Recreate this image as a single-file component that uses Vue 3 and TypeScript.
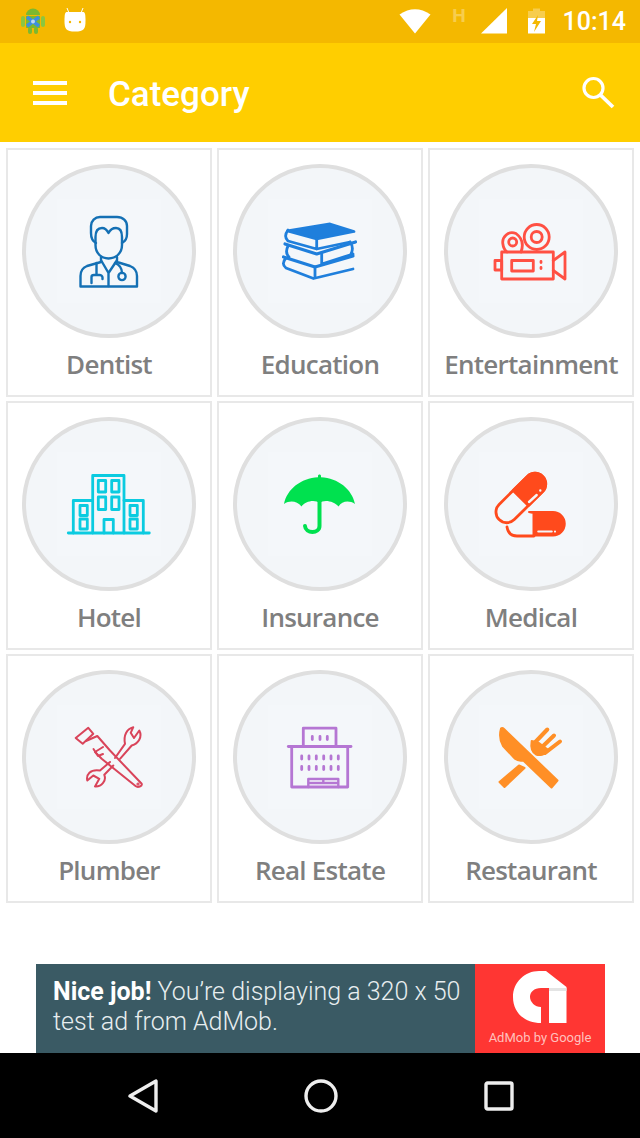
<script setup lang="ts">
type Shape = { d: string; fill?: boolean; color?: string; w?: number };
type Category = { name: string; color: string; w: number; shapes: Shape[] };

const circle = (cx: number, cy: number, r: number) =>
  `M${cx - r} ${cy}a${r} ${r} 0 1 0 ${r * 2} 0a${r} ${r} 0 1 0 ${-r * 2} 0Z`;
const box = (x1: number, y1: number, x2: number, y2: number) => `M${x1} ${y1}H${x2}V${y2}H${x1}Z`;
const bg = "#f3f6f9";

const categories: Category[] = [
  {
    name: "Dentist",
    color: "#1470b4",
    w: 2.4,
    shapes: [
      { d: "M39 44C35 42 34 39 34 34V27C34 22 38 18 43 18H60C66 18 70 22 70 27V35C70 39 69 42 65 44" },
      { d: "M38.5 38C38.5 32 41 29 45 29C48 29 50 31 51.5 34C53 31 56 29 59 29C63 29 65 32 65 38V46C65 54 59 59.5 51.5 59.5C44 59.5 38.5 54 38.5 46Z" },
      { d: "M44 58V63L30 67C25 69 23.5 72 23.5 77V87.5H80V77C80 72 78 69 73 67L60 63V58" },
      { d: "M44.5 62L51.5 74L59.5 62M51.5 74V87" },
      { d: "M39.5 64V75M34.5 84V78C34.5 76.500 35.500 76 37 76H42.500C44 76 45.500 77 45.500 78.500V80" },
      { d: "M58 64C63 66 65 69 65 74" },
      { d: circle(65, 77.5, 3.6) },
    ],
  },
  {
    name: "Education",
    color: "#1f7fdc",
    w: 2.8,
    shapes: [
      { d: "M19.500 32L62 25L86 32.500L48.700 40Z", fill: true },
      { d: "M20 31C17 35 17 39 20 42L48.700 50L82 43M48.700 40V50" },
      { d: "M17 45L48.700 55L87.500 43", w: 3.2 },
      { d: "M20 47C17.500 52 18 55 21 58M53.700 54V65M53.700 65L85 55M82 43C85 47 85 51 83 55" },
      { d: "M15.500 58L47 68L85 57", w: 3.2 },
      { d: "M18 59C14.500 63 14.500 66 18 69L45.500 79.500L85 70M47 68V79" },
    ],
  },
  {
    name: "Entertainment",
    color: "#ff5043",
    w: 2.8,
    shapes: [
      { d: circle(57.7, 38, 12.5) },
      { d: circle(57.7, 38, 5.5) },
      { d: "M42 53C45 45 43 39 37 34.500C29 31.500 23 38 23.800 44.500C24.200 48 25.500 51 28 53" },
      { d: circle(33.7, 43, 4) },
      { d: box(22.7, 53, 74.3, 80) },
      { d: box(16, 61.5, 22.7, 71) },
      { d: box(32.7, 61.5, 54.3, 72) },
      { d: "M62 62.500V63.500M62 68.500V69.500", w: 2.8 },
      { d: "M74.300 61.500L86 53V80L74.300 71.500" },
    ],
  },
  {
    name: "Hotel",
    color: "#0bcbe0",
    w: 2.8,
    shapes: [
      { d: "M35.700 81V23.500H67V81" },
      { d: "M35.700 48.500H16.300V81M67 48.500H86.300V81" },
      { d: "M11.300 81H92.300" },
      { d: box(41.3, 28.5, 48.7, 40) },
      { d: box(54.7, 28.5, 62, 40) },
      { d: box(41.3, 45, 48.7, 57.5) },
      { d: box(54.7, 45, 62, 57.5) },
      { d: "M47 81V67.500H56.300V81" },
      { d: box(23, 53.5, 30.3, 63.5) },
      { d: box(23, 67, 30.3, 77) },
      { d: box(73, 53.5, 80.3, 63.5) },
      { d: box(73, 67, 80.3, 77) },
    ],
  },
  {
    name: "Insurance",
    color: "#00e14f",
    w: 0,
    shapes: [
      {
        d: "M16 52C19 37 33 26 50 25.200V24C50 22 53 22 53 24V25.200C70 26 84 37 87 52C81 48 74 49 70.500 54.500C66 49 56 47 51.500 51C47 47 37 49 33.500 54.500C29 49 22 48 16 52Z",
        fill: true,
      },
      { d: "M51.500 50V74C51.500 82 37.500 82 37 74", w: 4 },
    ],
  },
  {
    name: "Medical",
    color: "#ff4a1c",
    w: 2.8,
    shapes: [
      { d: "M48.400 24.400A10.700 10.700 0 0 1 63.600 39.600L35.300 67.600A10.700 10.700 0 0 1 20.100 52.400Z" },
      { d: "M34.200 38.400L48.400 24.400A10.700 10.700 0 0 1 63.600 39.600L49.400 53.600Z", fill: true },
      { d: "M50 50L57.700 43M61.300 38.500V38.600", color: bg, w: 2.4 },
      { d: "M50 60H74A11.750 11.750 0 0 1 74 83.500H54.500V61Z", fill: true, w: 2 },
      { d: "M28 75C29 81 33 84 38 84H55" },
      { d: "M59.300 79.500H72.700M76 79.500V79.600", color: bg, w: 2.2 },
    ],
  },
  {
    name: "Plumber",
    color: "#d9445a",
    w: 2,
    shapes: [
      { d: "M25.700 38.800L18.700 33L31.300 22.800L36.300 28.800Z" },
      { d: "M29 36L40.300 31L53 45.500L84.700 78.800C85.500 81 81 83 78.500 81L44.700 53.800L38 47L46 42" },
      { d: "M36.500 44L41 51L46 49" },
      { d: "M58 53L68 38.800C66.300 30.500 69.700 23.800 76.300 22.200L73.700 27.800L77 33L82.300 25.500C85.700 32 81.300 38.800 74.700 40.500L63 53.800" },
      { d: "M53 57L43 65.500C33 63.800 29 70 30.300 75.500L36.300 70.500L42.300 73.800L38 81.500C44.700 82 49.700 75.500 47.300 69.800L56.300 60.500" },
      { d: circle(81, 79, 0.6) },
    ],
  },
  {
    name: "Real Estate",
    color: "#b576d3",
    w: 2.8,
    shapes: [
      { d: "M35.300 41.500V23.200H68V41.500" },
      { d: "M20.300 41.500H83" },
      { d: "M23.700 41.500V82H79.700V41.500" },
      { d: "M44.300 31.500V34.500M52 31.500V34.500M59.300 31.500V34.500" },
      { d: "M33.700 51V54M41 51V54M48.300 51V54M55.700 51V54M63 51V54M70.300 51V54" },
      { d: "M33.700 61.500V64.500M41 61.500V64.500M48.300 61.500V64.500M55.700 61.500V64.500M63 61.500V64.500M70.300 61.500V64.500" },
      { d: "M40.300 82V74H70.300V82M40.300 78H70.300M55.300 74V78", w: 2.4 },
    ],
  },
  {
    name: "Restaurant",
    color: "#ff8f26",
    w: 2,
    shapes: [
      { d: "M22 23.500C23 22.500 24 23 25 24L78.500 75.500L72.500 82.500L44.300 55.500C41 56 38 55.500 36 53.800L24 41C21 36 20.500 29 22 23.500Z", fill: true },
      { d: "M40 60.500L45.500 63L25.500 82L20.500 77Z", fill: true },
      { d: "M54.500 39L68.300 24.500M61 44L75 30.500M66 48L81 36.500", w: 4 },
      { d: "M52.700 36C51.500 43 53.500 47.500 57 49.500C60 50.500 66 50.500 70 45.500L60 38Z", fill: true },
    ],
  },
];
</script>

<template>
  <div class="page">
    <div class="status-bar">
      <svg class="droid" viewBox="0 0 26 27" width="26" height="27">
        <path d="M6 8a7 6.500 0 0 1 14 0Z" fill="#7cb82f" />
        <rect x="6" y="9" width="14" height="12" fill="#7cb82f" />
        <rect x="1" y="9" width="4" height="11" rx="2" fill="#8cc63f" />
        <rect x="21" y="9" width="4" height="11" rx="2" fill="#8cc63f" />
        <rect x="8" y="20" width="4" height="7" rx="2" fill="#7cb82f" />
        <rect x="14" y="20" width="4" height="7" rx="2" fill="#7cb82f" />
        <path d="M7 10L19 19M19 10L7 19" stroke="#3d8fe0" stroke-width="3.500" />
        <circle cx="13" cy="14.500" r="2" fill="#bcd8f2" />
      </svg>
      <svg class="marshmallow" viewBox="0 0 22 26" width="22" height="26">
        <path d="M5 6L3 1M17 6L19 1" stroke="#fff" stroke-width="1" />
        <path d="M3 5H19C21 5 21.500 7 21.500 14C21.500 22 20 24.500 11 24.500C2 24.500 0.500 22 0.500 14C0.500 7 1 5 3 5Z" fill="#fff" />
        <circle cx="6" cy="15" r="1.200" fill="#f4b800" />
        <circle cx="16" cy="15" r="1.200" fill="#f4b800" />
      </svg>
      <div class="status-right">
        <svg viewBox="0 0 32 25" width="32" height="25">
          <path d="M0.500 5.500Q16 -5 31.500 5.500L16 24.500Z" fill="#fff" />
        </svg>
        <span class="net">H</span>
        <svg viewBox="0 0 26 26" width="26" height="26">
          <path d="M0 25.500L26 0V25.500Z" fill="#fff" />
        </svg>
        <svg viewBox="0 0 17 26" width="17" height="26">
          <path d="M5 0.500H12V3H17V12H0V3H5Z" fill="#fff" opacity="0.3" />
          <path d="M0 10H17V25.500H0Z" fill="#fff" />
          <path d="M10 7L4 16H8L6 24L13 13H9Z" fill="#f4b800" />
        </svg>
        <span class="time">10:14</span>
      </div>
    </div>

    <header class="toolbar">
      <div class="menu"><span /><span /><span /></div>
      <h1 class="title">Category</h1>
      <svg class="search" viewBox="0 0 33 33" width="33" height="33">
        <circle cx="11.500" cy="12" r="9.500" fill="none" stroke="#fff" stroke-width="3.200" />
        <path d="M18.500 19L31 31" stroke="#fff" stroke-width="3.800" />
      </svg>
    </header>

    <main class="content">
      <div class="grid">
        <div v-for="cat in categories" :key="cat.name" class="card">
          <div class="circle">
            <svg class="icon" viewBox="0 0 104 104" width="104" height="104">
              <path
                v-for="(s, i) in cat.shapes"
                :key="i"
                :d="s.d"
                :fill="s.fill ? (s.color ?? cat.color) : 'none'"
                :stroke="s.color ?? cat.color"
                :stroke-width="s.w ?? cat.w"
                stroke-linecap="round"
                stroke-linejoin="round"
              />
            </svg>
          </div>
          <div class="label">{{ cat.name }}</div>
        </div>
      </div>

      <div class="ad">
        <div class="ad-text"><b>Nice job!</b> You’re displaying a 320 x 50 test ad from AdMob.</div>
        <div class="ad-brand">
          <svg viewBox="0 0 54 52" width="54" height="52">
            <path d="M26 0H33L53.500 16V52H36V17H28C21 17 17 21 17 26C17 31 22 36 28 36V52C12 52 0 42 0 26C0 11 12 0 26 0Z" fill="#fff" />
            <path d="M36 17H53.500V20H36Z" fill="#e4e4e4" />
          </svg>
          <span>AdMob by Google</span>
        </div>
      </div>
    </main>

    <nav class="nav-bar">
      <svg viewBox="0 0 30 34" width="30" height="34">
        <path d="M28 2V32L2 17Z" fill="none" stroke="#eee" stroke-width="3.400" stroke-linejoin="round" />
      </svg>
      <svg viewBox="0 0 34 34" width="34" height="34">
        <circle cx="17" cy="17" r="15" fill="none" stroke="#eee" stroke-width="3.400" />
      </svg>
      <svg viewBox="0 0 30 30" width="30" height="30">
        <rect x="2" y="2" width="26" height="26" rx="1.500" fill="none" stroke="#eee" stroke-width="3.400" />
      </svg>
    </nav>
  </div>
</template>

<style scoped>
.page {
  width: 640px;
  height: 1138px;
  display: flex;
  flex-direction: column;
  background: #fff;
  overflow: hidden;
}

.status-bar {
  height: 43px;
  flex: none;
  display: flex;
  align-items: center;
  background: #f4b800;
  padding-left: 20px;
}

.droid {
  margin-top: -3px;
}

.marshmallow {
  margin-left: 18px;
  margin-top: -3px;
}

.status-right {
  margin-left: auto;
  display: flex;
  align-items: center;
  padding-right: 14px;
  margin-top: -1px;
}

.net {
  font: 700 19px "Roboto", sans-serif;
  color: #fff;
  opacity: 0.3;
  margin: -11px 15px 0 21px;
}

.status-right svg:nth-of-type(3) {
  margin-left: 21px;
}

.time {
  font: 500 25px "Roboto", sans-serif;
  color: #fff;
  margin-left: 18px;
}

.toolbar {
  height: 99px;
  flex: none;
  display: flex;
  align-items: center;
  background: #ffce00;
  padding: 0 25px 0 33px;
}

.menu {
  width: 34px;
  display: flex;
  flex-direction: column;
  gap: 6px;
}

.menu span {
  height: 4px;
  background: #fff;
}

.title {
  margin: 3px 0 0 41px;
  font: 500 35px "Roboto", sans-serif;
  color: #fff;
}

.search {
  margin-left: auto;
}

.content {
  flex: 1;
  display: flex;
  flex-direction: column;
  padding: 6px 6px 0;
}

.grid {
  display: grid;
  grid-template-columns: repeat(3, 206px);
  grid-auto-rows: 249px;
  column-gap: 5px;
  row-gap: 4px;
}

.card {
  box-sizing: border-box;
  border: 2px solid #e8e8e8;
  display: flex;
  flex-direction: column;
  align-items: center;
  padding-top: 14px;
}

.circle {
  box-sizing: border-box;
  width: 174px;
  height: 174px;
  flex: none;
  border: 4px solid #dfdfdf;
  border-radius: 50%;
  background: #f3f6f9;
  display: flex;
  align-items: center;
  justify-content: center;
}

.icon {
  background: #f4f7fa;
}

.label {
  margin-top: 8px;
  font: 600 26px/36px "Open Sans", sans-serif;
  letter-spacing: -0.75px;
  color: #7f7f7f;
  white-space: nowrap;
}

.ad {
  margin: 61px 0 0 30px;
  width: 569px;
  height: 89px;
  display: flex;
  background: #3a5a64;
}

.ad-text {
  width: 439px;
  box-sizing: border-box;
  padding: 13px 0 0 17px;
  font: 300 25px/30px "Roboto", sans-serif;
  color: #e8eef0;
}

.ad-text b {
  font-weight: 700;
  color: #fff;
}

.ad-brand {
  flex: 1;
  background: #ff3633;
  display: flex;
  flex-direction: column;
  align-items: center;
  padding-top: 7px;
}

.ad-brand span {
  font: 400 13px/16px "Roboto", sans-serif;
  color: #ffc0bd;
  margin-top: 7px;
  white-space: nowrap;
}

.nav-bar {
  height: 85px;
  flex: none;
  background: #000;
  display: flex;
  align-items: center;
  padding-left: 128px;
  gap: 146px;
}
</style>
